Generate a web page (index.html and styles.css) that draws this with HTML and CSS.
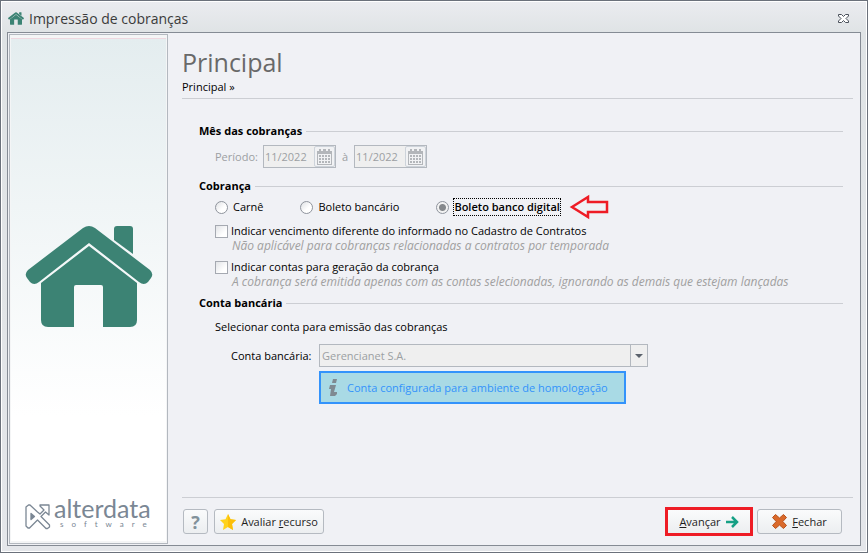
FILE: index.html
```html
<!DOCTYPE html>
<html lang="pt-BR">
<head>
    <meta charset="UTF-8">
    <meta name="viewport" content="width=device-width, initial-scale=1.0">
    <title>Impressão de cobranças</title>
    <link rel="stylesheet" href="styles.css">
</head>
<body>
    <div class="window">
        <!-- Title bar -->
        <header class="titlebar">
            <svg class="titlebar-icon" viewBox="0 0 128 102" aria-hidden="true">
                <use href="#house"></use>
            </svg>
            <span class="titlebar-text">Impressão de cobranças</span>
            <button type="button" class="close-btn" aria-label="Fechar janela">
                <svg width="11" height="9" viewBox="0 0 11 9">
                    <path d="M.5 .5H3.5L5.5 2.5L7.5 .5H10.5V2L8 4.5L10.5 7V8.5H7.5L5.5 6.5L3.5 8.5H.5V7L3 4.5L.5 2Z" fill="#fff" stroke="#4a505a"/>
                </svg>
            </button>
        </header>

        <div class="frame">
            <!-- Sidebar -->
            <aside class="sidebar">
                <div class="sidebar-art">
                    <svg class="house" viewBox="0 0 128 102" aria-hidden="true">
                        <g id="house" fill="#3c8374">
                            <path d="M58 2Q64 -2 70 2L125 44Q129 48 126 52L123 56Q119 60 114 56L64 17L14 56Q9 60 5 56L2 52Q-1 48 3 44Z"/>
                            <path d="M89 3Q89 0 92 0H105Q108 0 108 3V28L89 14Z"/>
                            <path d="M64 20L112 57V94Q112 101 105 101H78V61Q78 59 76 59H51Q49 59 49 61V101H23Q16 101 16 94V57Z"/>
                        </g>
                    </svg>
                    <div class="brand">
                        <svg class="brand-icon" viewBox="0 0 26 27" fill="none" stroke="#7b8794" stroke-width="1.3" stroke-linejoin="round" aria-hidden="true">
                            <path d="M3.5 2H5L12.5 9L15 11L19 7L15 3V2H24V12L20.5 9L16 13.5L24.5 22V24L22.5 25.5H21L12.5 17L4.5 25H3L1 23V4Z"/>
                            <path d="M6 10.5L9.5 13.5L6 16.5Z" fill="#7b8794"/>
                        </svg>
                        <div class="brand-text">
                            <span class="brand-name">alterdata</span>
                            <span class="brand-tag">software</span>
                        </div>
                    </div>
                </div>
            </aside>

            <form class="content">
                <div class="page-head">
                    <h1>Principal</h1>
                    <p>Principal »</p>
                </div>

                <div class="sections">
                    <h2>Mês das cobranças</h2>
                    <div class="row period">
                        <label for="start">Período:</label>
                        <div class="date">
                            <input type="text" id="start" value="11/2022" disabled>
                            <button type="button" aria-label="Abrir calendário inicial" disabled>
                                <svg width="15" height="16" viewBox="0 0 15 16"><use href="#calendar"></use></svg>
                            </button>
                        </div>
                        <label for="end">à</label>
                        <div class="date">
                            <input type="text" id="end" value="11/2022" disabled>
                            <button type="button" aria-label="Abrir calendário final" disabled>
                                <svg width="15" height="16" viewBox="0 0 15 16">
                                    <g id="calendar" fill="#b3b6ba">
                                        <path d="M0 2H2V0H4V2H6V0H9V2H11V0H13V2H15V16H0ZM1 5V15H14V5Z" fill-rule="evenodd"/>
                                        <path d="M2 6h2v2h-2zM5 6h2v2h-2zM8 6h2v2h-2zM11 6h2v2h-2zM2 9h2v2h-2zM5 9h2v2h-2zM8 9h2v2h-2zM11 9h2v2h-2zM2 12h2v2h-2zM5 12h2v2h-2zM8 12h2v2h-2zM11 12h2v2h-2z"/>
                                    </g>
                                </svg>
                            </button>
                        </div>
                    </div>

                    <h2>Cobrança</h2>
                    <div class="row kinds">
                        <label><input type="radio" name="kind">Carnê</label>
                        <label><input type="radio" name="kind">Boleto bancário</label>
                        <label><input type="radio" name="kind" checked><span class="focused">Boleto banco digital</span></label>
                        <svg class="pointer" width="40" height="26" viewBox="0 0 40 26" aria-hidden="true">
                            <path d="M3 13L19 3V8H38V18H19V23Z" fill="none" stroke="#ee1c25" stroke-width="2.5"/>
                        </svg>
                    </div>
                    <div class="option">
                        <label><input type="checkbox">Indicar vencimento diferente do informado no Cadastro de Contratos</label>
                        <p class="hint">Não aplicável para cobranças relacionadas a contratos por temporada</p>
                    </div>
                    <div class="option">
                        <label><input type="checkbox">Indicar contas para geração da cobrança</label>
                        <p class="hint">A cobrança será emitida apenas com as contas selecionadas, ignorando as demais que estejam lançadas</p>
                    </div>

                    <h2>Conta bancária</h2>
                    <p class="lead">Selecionar conta para emissão das cobranças</p>
                    <div class="account">
                        <label for="account">Conta bancária:</label>
                        <div class="combo">
                            <select id="account" disabled>
                                <option>Gerencianet S.A.</option>
                            </select>
                        </div>
                        <div class="notice">
                            <svg width="10" height="17" viewBox="0 0 10 17" fill="#7f8a92" aria-hidden="true">
                                <path d="M4 0H8L7 4H3ZM1 6H7L5 13H8V15L6 17H1L2 10H0Z"/>
                            </svg>
                            Conta configurada para ambiente de homologação
                        </div>
                    </div>
                </div>

                <!-- Footer buttons -->
                <div class="actions">
                    <button type="button" class="btn help" aria-label="Ajuda">?</button>
                    <button type="button" class="btn rate">
                        <svg width="16" height="16" viewBox="0 0 16 16" aria-hidden="true">
                            <path d="M8 0L10.5 5.3L16 6L12 10L13 16L8 13L3 16L4 10L0 6L5.5 5.3Z" fill="#ffd21c"/>
                            <path d="M8 0L10.5 5.3L16 6L12 10L13 16L8 13Z" fill="#fcbf09"/>
                        </svg>
                        <span>Avaliar <u>r</u>ecurso</span>
                    </button>
                    <button type="submit" class="btn next">
                        <span><u>A</u>vançar</span>
                        <svg width="13" height="12" viewBox="0 0 13 12" aria-hidden="true">
                            <path d="M0 6H11M6 1L11 6L6 11" fill="none" stroke="#16a085" stroke-width="2.5"/>
                        </svg>
                    </button>
                    <button type="button" class="btn quit">
                        <svg width="15" height="15" viewBox="0 0 15 15" aria-hidden="true">
                            <path d="M3.5 .5L7.5 4L11.5 .5L14.5 3.5L10.8 7.5L14.5 11.5L11.5 14.5L7.5 11L3.5 14.5L.5 11.5L4.2 7.5L.5 3.5Z" fill="#d9692b" stroke="#b9531c"/>
                        </svg>
                        <span><u>F</u>echar</span>
                    </button>
                </div>
            </form>
        </div>
    </div>
</body>
</html>
```
FILE: styles.css
```css
:root {
    --line: #ccced3;
    --edge: #b3b8bf;
    --panel: #f0f1f5;
    --muted: #9c9fa3;
}

* {
    box-sizing: border-box;
}

body {
    margin: 0;
    font-family: "Open Sans", "Noto Sans", sans-serif;
    font-size: 11px;
    line-height: 16px;
    color: #000;
}

h1, h2, p {
    margin: 0;
}

input, select, button {
    font: inherit;
    margin: 0;
}

.window {
    display: flex;
    flex-direction: column;
    min-height: 100vh;
    padding: 0 6px 6px;
    border: 1px solid #6b717b;
    box-shadow: inset 0 0 0 1px #fff;
    background: linear-gradient(#ebecf0, #dfe3e5 32px, #e4e6ea);
}

/* Title bar */
.titlebar {
    display: flex;
    align-items: center;
    height: 31px;
    padding: 4px 12px 0 1px;
}

.titlebar-icon {
    width: 16px;
    height: 13px;
}

.titlebar-text {
    margin-left: 5px;
    font-size: 14px;
    color: #3b3b3b;
}

.close-btn {
    display: flex;
    margin-left: auto;
    padding: 0;
    border: none;
    background: none;
}

.frame {
    display: flex;
    flex: 1;
    border: 1px solid #858b94;
    background: var(--panel);
}

/* Sidebar */
.sidebar {
    display: flex;
    flex: none;
    width: 159px;
    margin: 1px;
    padding: 3px 1px 2px;
    border: 1px solid var(--edge);
    background: #f4f5f6;
}

.sidebar-art {
    display: flex;
    flex-direction: column;
    flex: 1;
    min-width: 0;
    padding: 14px 13px 9px 14px;
    border-top: 1px solid #efd8e0;
    background: linear-gradient(#e4edef, #fff 75%);
}

.house {
    width: 128px;
    height: 102px;
    margin: auto 0;
}

.brand {
    display: flex;
    align-items: center;
    color: #7b8794;
}

.brand-icon {
    flex: none;
    width: 26px;
    height: 27px;
}

.brand-text {
    display: flex;
    flex-direction: column;
    margin-left: 3px;
    font-family: Lato, sans-serif;
}

.brand-name {
    font-size: 25px;
    line-height: 16px;
}

.brand-tag {
    padding-left: 6px;
    font-size: 8px;
    line-height: 16px;
    letter-spacing: 8px;
}

/* Content */
.content {
    display: flex;
    flex-direction: column;
    flex: 1;
    padding: 0 7px 0 13px;
}

.page-head {
    padding: 12px 0 3px;
    border-bottom: 1px solid var(--line);
}

h1 {
    font-size: 25px;
    font-weight: 400;
    line-height: 34px;
    color: #696969;
}

.sections {
    flex: 1;
    padding: 24px 10px 0 17px;
}

h2 {
    display: flex;
    align-items: center;
    gap: 4px;
    font-size: 11px;
    line-height: 16px;
}

h2::after {
    content: "";
    flex: 1;
    height: 1px;
    background: var(--line);
}

.row {
    display: flex;
    align-items: center;
    padding-left: 16px;
}

.period {
    gap: 5px;
    margin: 6px 0 10px;
    color: var(--muted);
}

.date {
    display: flex;
    width: 73px;
    height: 23px;
    border: 1px solid var(--edge);
    background: #efefef;
}

.date + label {
    margin: 0 1px;
}

.date input {
    flex: 1;
    min-width: 0;
    padding: 0 0 0 1px;
    border: none;
    background: none;
    color: var(--muted);
}

.date button {
    display: flex;
    align-items: center;
    justify-content: center;
    width: 21px;
    padding: 0;
    border: 1px solid #cdd3da;
    border-radius: 2px;
    background: #f1f2f4;
}

.kinds {
    gap: 37px;
    height: 16px;
    margin: 5px 0 8px;
}

.kinds label, .option label {
    display: flex;
    align-items: center;
}

.kinds input {
    appearance: none;
    width: 13px;
    height: 13px;
    margin-right: 5px;
    border: 1px solid #8f949d;
    border-radius: 50%;
    background: linear-gradient(135deg, #dfe1e4, #fff 60%);
}

.kinds input:checked {
    background: radial-gradient(#85888c 3px, #f2f2f2 4px);
}

.focused {
    outline: 1px dotted #000;
    font-weight: 600;
}

.pointer {
    margin-left: -28px;
}

.option {
    margin-bottom: 6px;
    padding-left: 16px;
}

.option input {
    appearance: none;
    width: 13px;
    height: 13px;
    margin-right: 3px;
    border: 1px solid #a5a9b1;
    background: linear-gradient(135deg, #e2e4e7, #fff 70%);
}

.hint {
    padding-left: 17px;
    font-size: 12px;
    line-height: 14px;
    font-style: italic;
    color: #a0a0a0;
}

.lead {
    margin: 8px 0 9px;
    padding-left: 16px;
}

.account {
    display: grid;
    grid-template-columns: 82px 329px;
    gap: 4px 6px;
    align-items: center;
    padding-left: 32px;
}

.account label {
    white-space: nowrap;
}

.combo {
    position: relative;
}

.combo::before {
    content: "";
    position: absolute;
    top: 0;
    right: 17px;
    height: 100%;
    border-left: 1px solid var(--edge);
}

.combo::after {
    content: "";
    position: absolute;
    top: 10px;
    right: 5px;
    border: 4px solid transparent;
    border-top-color: #5b626c;
    border-bottom: none;
}

.combo select {
    display: block;
    appearance: none;
    width: 100%;
    height: 23px;
    padding: 0 2px;
    border: 1px solid var(--edge);
    border-radius: 0;
    background: #efefef;
    color: var(--muted);
    opacity: 1;
}

.notice {
    display: flex;
    align-items: center;
    gap: 8px;
    grid-column: 2;
    justify-self: start;
    height: 33px;
    padding: 0 16px 0 8px;
    border: 2px solid #3393fb;
    background: #a9dae5;
    color: #3393fb;
    white-space: nowrap;
}

/* Footer */
.actions {
    display: flex;
    align-items: center;
    gap: 6px;
    height: 48px;
    padding: 0 11px 0 1px;
    border-top: 1px solid var(--line);
}

.btn {
    display: flex;
    align-items: center;
    justify-content: center;
    gap: 5px;
    height: 25px;
    padding: 0 5px;
    border: 1px solid #b5bac1;
    border-radius: 3px;
    background: linear-gradient(#fafbfc, #eceef0);
    color: #1e1e1e;
    white-space: nowrap;
}

.help {
    width: 25px;
    font-size: 18px;
    font-weight: 700;
    color: #82919b;
}

.rate {
    width: 110px;
}

.next {
    width: 88px;
    height: 29px;
    margin-left: auto;
    border: 3px solid #ee1c25;
    border-radius: 0;
}

.quit {
    width: 85px;
    margin-left: -2px;
}
```
